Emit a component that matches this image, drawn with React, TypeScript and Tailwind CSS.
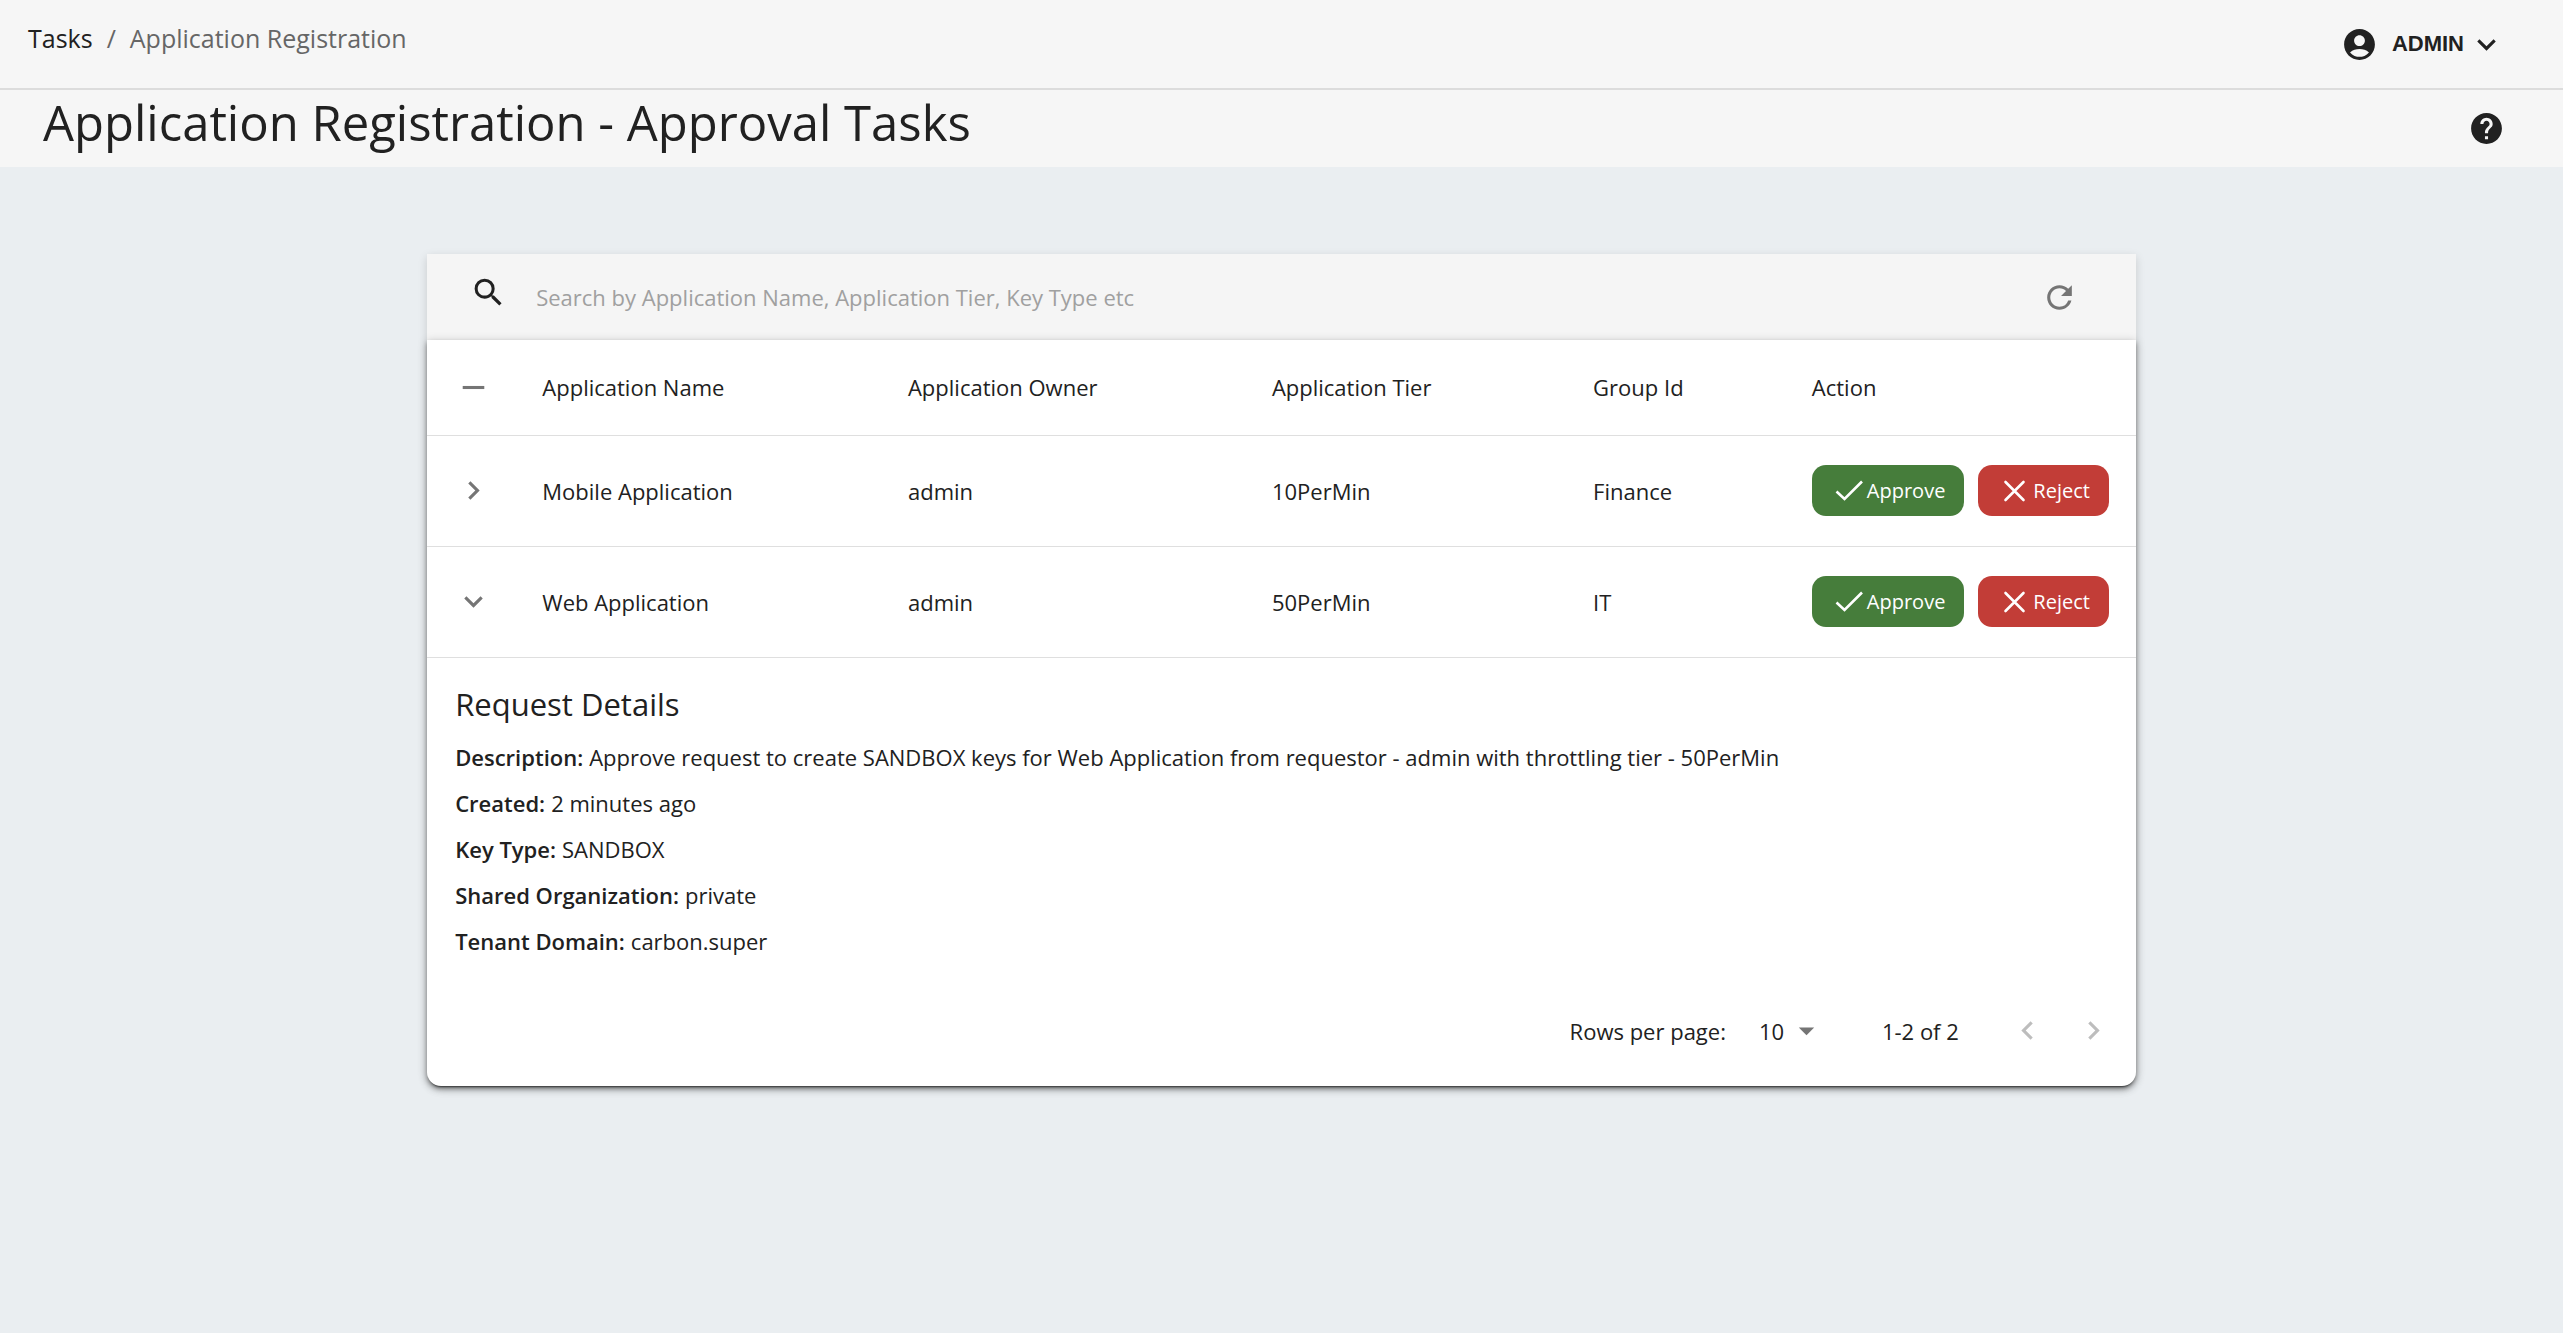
import { useState } from 'react';
import {
  MdAccountCircle,
  MdArrowDropDown,
  MdChevronLeft,
  MdChevronRight,
  MdHelp,
  MdKeyboardArrowDown,
  MdRefresh,
  MdRemove,
  MdSearch,
} from 'react-icons/md';

type Task = { name: string; owner: string; tier: string; group: string };

const tasks: Task[] = [
  { name: 'Mobile Application', owner: 'admin', tier: '10PerMin', group: 'Finance' },
  { name: 'Web Application', owner: 'admin', tier: '50PerMin', group: 'IT' },
];

const details = [
  {
    label: 'Description:',
    value:
      'Approve request to create SANDBOX keys for Web Application from requestor - admin with throttling tier - 50PerMin',
  },
  { label: 'Created:', value: '2 minutes ago' },
  { label: 'Key Type:', value: 'SANDBOX' },
  { label: 'Shared Organization:', value: 'private' },
  { label: 'Tenant Domain:', value: 'carbon.super' },
];

function CheckIcon() {
  return (
    <svg viewBox="0 0 36 36" className="size-9" fill="none" stroke="currentColor" strokeWidth="2.6" aria-hidden="true">
      <path d="M5.5 18.5l8 7.5L31 8.5" />
    </svg>
  );
}

function CrossIcon() {
  return (
    <svg viewBox="0 0 36 36" className="size-9" fill="none" stroke="currentColor" strokeWidth="2.6" strokeLinecap="round" aria-hidden="true">
      <path d="M8.5 9l18 18M26.5 9l-18 18" />
    </svg>
  );
}

function Header() {
  return (
    <header className="flex h-[90px] items-start justify-between border-b-2 border-[#dcdcdc] bg-[#f6f6f6] pl-7 pr-[58px]">
      <nav aria-label="Breadcrumb" className="pt-5">
        <ol className="flex gap-3.5 text-[25px] leading-9">
          <li><a href="#tasks">Tasks</a></li>
          <li aria-hidden="true" className="text-[#666]">/</li>
          <li className="text-[#666]">Application Registration</li>
        </ol>
      </nav>
      <button type="button" className="flex h-[88px] items-center font-['Liberation_Sans',sans-serif] text-[22px] font-bold">
        <MdAccountCircle className="mr-3.5 size-[37px]" />
        ADMIN
        <MdKeyboardArrowDown className="ml-1 size-[37px]" />
      </button>
    </header>
  );
}

function TitleBar() {
  return (
    <div className="flex h-[77px] items-center justify-between bg-[#f6f6f6] pl-[43px] pr-[58px]">
      <h1 className="pb-3.5 text-[49px] leading-[60px]">Application Registration - Approval Tasks</h1>
      <button type="button" aria-label="Help"><MdHelp className="size-[37px]" /></button>
    </div>
  );
}

function TaskRow({ task, open, onToggle }: { task: Task; open: boolean; onToggle: () => void }) {
  return (
    <tr className="h-[111px] border-b border-[#dfdfdf]">
      <td className="pl-7">
        <button type="button" aria-label={`Toggle ${task.name}`} aria-expanded={open} onClick={onToggle} className="block text-[#757575]">
          {open ? <MdKeyboardArrowDown className="size-[37px]" /> : <MdChevronRight className="size-[37px]" />}
        </button>
      </td>
      <td className="px-7">{task.name}</td>
      <td className="px-7">{task.owner}</td>
      <td className="px-7">{task.tier}</td>
      <td className="px-7">{task.group}</td>
      <td className="pl-7">
        <div className="flex gap-3.5 text-[20px] text-white">
          <button type="button" className="flex h-[51px] items-center rounded-[14px] bg-[#467d3b] px-[19px]">
            <CheckIcon />
            Approve
          </button>
          <button type="button" className="flex h-[51px] items-center rounded-[14px] bg-[#c23d37] px-[19px]">
            <CrossIcon />
            Reject
          </button>
        </div>
      </td>
    </tr>
  );
}

export default function App() {
  const [open, setOpen] = useState([false, true]);
  const toggle = (index: number) => setOpen(open.map((value, i) => (i === index ? !value : value)));

  return (
    <div className="min-h-screen bg-[#eaeef1] font-['Open_Sans',sans-serif] text-[22px] leading-8 text-[#212121]">
      <Header />
      <TitleBar />
      <main className="mx-auto mt-[87px] w-2/3 rounded-b-[14px] shadow-[0_3px_10px_rgba(0,0,0,0.15)]">
        <div className="flex h-[86px] items-center bg-[#f5f5f5] pl-[43px] pr-[58px]">
          <MdSearch className="mb-2.5 size-[37px]" />
          <input
            type="search"
            aria-label="Search tasks"
            placeholder="Search by Application Name, Application Tier, Key Type etc"
            className="ml-[29px] min-w-0 flex-1 bg-transparent outline-none placeholder:text-[#a0a0a0] placeholder:opacity-100"
          />
          <button type="button" aria-label="Refresh" className="text-[#757575]"><MdRefresh className="size-[37px]" /></button>
        </div>
        <section className="rounded-b-[14px] bg-white shadow-[0_3px_2px_-2px_rgba(0,0,0,0.6),0_3px_4px_rgba(0,0,0,0.3),0_2px_10px_rgba(0,0,0,0.25)]">
          <table className="w-full table-fixed border-collapse text-left">
            <colgroup>
              <col className="w-[5.1%]" />
              <col className="w-[21.4%]" />
              <col className="w-[21.3%]" />
              <col className="w-[18.8%]" />
              <col className="w-[12.8%]" />
              <col />
            </colgroup>
            <thead>
              <tr className="h-[95px] border-b border-[#dfdfdf]">
                <th className="pl-7">
                  <button type="button" aria-label="Collapse all" className="block text-[#757575]"><MdRemove className="size-[37px]" /></button>
                </th>
                <th className="px-7 font-normal">Application Name</th>
                <th className="px-7 font-normal">Application Owner</th>
                <th className="px-7 font-normal">Application Tier</th>
                <th className="px-7 font-normal">Group Id</th>
                <th className="px-7 font-normal">Action</th>
              </tr>
            </thead>
            <tbody>
              {tasks.map((task, i) => (
                <TaskRow key={task.name} task={task} open={open[i]} onToggle={() => toggle(i)} />
              ))}
              <tr>
                <td colSpan={6} className="px-7 pt-5 pb-6">
                  <h2 className="mb-1 text-[31px] leading-[52px]">Request Details</h2>
                  <dl className="leading-[46px]">
                    {details.map((item) => (
                      <div key={item.label} className="flex gap-1.5">
                        <dt className="font-semibold">{item.label}</dt>
                        <dd>{item.value}</dd>
                      </div>
                    ))}
                  </dl>
                </td>
              </tr>
            </tbody>
          </table>
          <footer className="flex h-[98px] items-center justify-end pb-3 pr-6">
            <label htmlFor="rows">Rows per page:</label>
            <span className="relative ml-[33px] flex items-center">
              <select id="rows" className="appearance-none bg-transparent pr-10" defaultValue="10">
                <option>10</option>
                <option>25</option>
                <option>50</option>
              </select>
              <MdArrowDropDown className="pointer-events-none absolute right-0 size-[37px] text-[#757575]" />
            </span>
            <span className="ml-[57px]">1-2 of 2</span>
            <button type="button" disabled aria-label="Previous page" className="ml-[50px] text-[#bdbdbd]"><MdChevronLeft className="size-[37px]" /></button>
            <button type="button" disabled aria-label="Next page" className="ml-[29px] text-[#bdbdbd]"><MdChevronRight className="size-[37px]" /></button>
          </footer>
        </section>
      </main>
    </div>
  );
}
